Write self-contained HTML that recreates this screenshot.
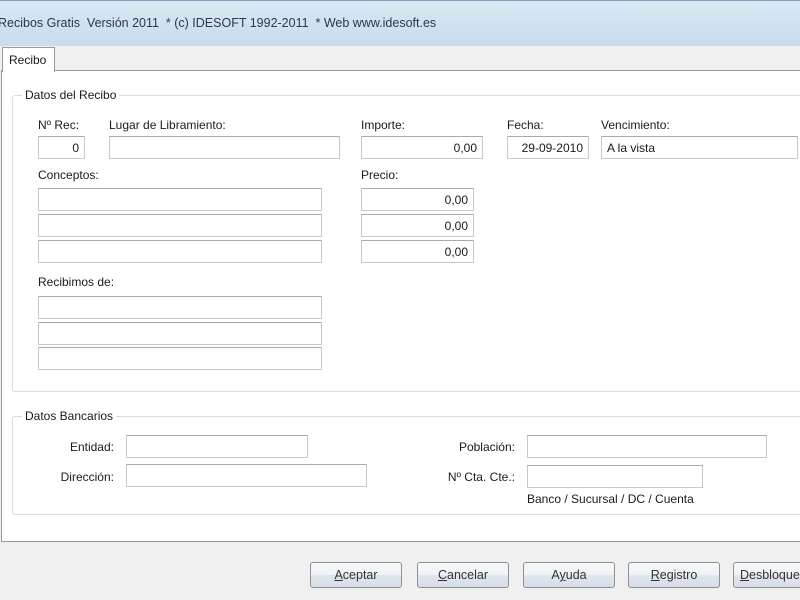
<!DOCTYPE html>
<html><head><meta charset="utf-8"><style>
*{margin:0;padding:0;box-sizing:border-box}
body{width:800px;height:600px;overflow:hidden;background:#f0f0f0;font-family:"Liberation Sans",sans-serif;font-size:12px;color:#1a1a1a;position:relative}
.a{position:absolute}
.title{left:0;top:0;width:800px;height:46px;background:linear-gradient(#dbe7f3,#c9dbee);border-top:1px solid #8a9fb5}
.title span{position:absolute;left:-2px;top:15px;font-size:12.5px;color:#2a3a4a}
.panel{left:1px;top:70px;width:800px;height:472px;background:#fff;border:1px solid #9a9a9a}
.tab{left:2px;top:47px;width:53px;height:25px;background:#fff;border:1px solid #9a9a9a;border-bottom:none;padding:5px 0 0 6px}
.grp{border:1px solid #dcdcdc;border-radius:3px}
.lg{background:#fff;padding:0 3px}
.in{border:1px solid #c8c8c8;border-top-color:#aaa;background:#fff;height:23px;padding:4px 5px;text-align:right}
.l{text-align:left}
.btn{top:562px;height:26px;width:92px;border:1px solid #8e8f8f;border-radius:3px;background:linear-gradient(#f6f8fb 0%,#eef2f7 50%,#e0e6ee 51%,#d6dde7 100%);text-align:center;line-height:24px;font-size:12.5px;color:#333}
u{text-decoration:underline}
</style></head><body>
<div class="a title"><span>Recibos Gratis&nbsp; Versión 2011&nbsp; * (c) IDESOFT 1992-2011&nbsp; * Web www.idesoft.es</span></div>
<div class="a panel"></div>
<div class="a tab">Recibo</div>

<div class="a grp" style="left:12px;top:95px;width:800px;height:297px"></div>
<div class="a lg" style="left:22px;top:88px">Datos del Recibo</div>
<div class="a" style="left:38px;top:118px">Nº Rec:</div>
<div class="a" style="left:109px;top:118px">Lugar de Libramiento:</div>
<div class="a" style="left:361px;top:118px">Importe:</div>
<div class="a" style="left:507px;top:118px">Fecha:</div>
<div class="a" style="left:601px;top:118px">Vencimiento:</div>
<div class="a in" style="left:38px;top:136px;width:47px">0</div>
<div class="a in" style="left:109px;top:136px;width:231px"></div>
<div class="a in" style="left:361px;top:136px;width:122px">0,00</div>
<div class="a in" style="left:507px;top:136px;width:82px">29-09-2010</div>
<div class="a in l" style="left:601px;top:136px;width:197px">A la vista</div>
<div class="a" style="left:38px;top:168px">Conceptos:</div>
<div class="a" style="left:361px;top:168px">Precio:</div>
<div class="a in" style="left:38px;top:188px;width:284px"></div>
<div class="a in" style="left:38px;top:214px;width:284px"></div>
<div class="a in" style="left:38px;top:240px;width:284px"></div>
<div class="a in" style="left:361px;top:188px;width:113px">0,00</div>
<div class="a in" style="left:361px;top:214px;width:113px">0,00</div>
<div class="a in" style="left:361px;top:240px;width:113px">0,00</div>
<div class="a" style="left:38px;top:275px">Recibimos de:</div>
<div class="a in" style="left:38px;top:296px;width:284px"></div>
<div class="a in" style="left:38px;top:322px;width:284px"></div>
<div class="a in" style="left:38px;top:347px;width:284px"></div>

<div class="a grp" style="left:12px;top:416px;width:800px;height:99px"></div>
<div class="a lg" style="left:22px;top:409px">Datos Bancarios</div>
<div class="a" style="left:40px;top:440px;width:74px;text-align:right">Entidad:</div>
<div class="a" style="left:40px;top:470px;width:74px;text-align:right">Dirección:</div>
<div class="a in" style="left:126px;top:435px;width:182px"></div>
<div class="a in" style="left:126px;top:464px;width:241px"></div>
<div class="a" style="left:420px;top:440px;width:95px;text-align:right">Población:</div>
<div class="a" style="left:420px;top:470px;width:95px;text-align:right">Nº Cta. Cte.:</div>
<div class="a in" style="left:527px;top:435px;width:240px"></div>
<div class="a in" style="left:527px;top:465px;width:176px"></div>
<div class="a" style="left:527px;top:492px">Banco / Sucursal / DC / Cuenta</div>

<div class="a btn" style="left:310px"><u>A</u>ceptar</div>
<div class="a btn" style="left:417px"><u>C</u>ancelar</div>
<div class="a btn" style="left:523px">A<u>y</u>uda</div>
<div class="a btn" style="left:628px"><u>R</u>egistro</div>
<div class="a btn" style="left:733px;text-align:left;padding-left:6px"><u>D</u>esbloquear</div>
</body></html>
